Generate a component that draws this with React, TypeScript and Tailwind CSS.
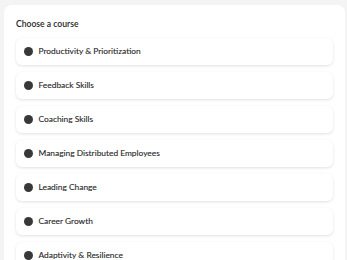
const courses = [
  'Productivity & Prioritization',
  'Feedback Skills',
  'Coaching Skills',
  'Managing Distributed Employees',
  'Leading Change',
  'Career Growth',
  'Adaptivity & Resilience',
];

export default function App() {
  return (
    <div className="h-[260px] w-[347px] overflow-hidden bg-[#f4f4f4] pt-[5px] pl-[4px] pr-[2px] font-['Lato',sans-serif] text-[#252525]">
      <div className="rounded-[8px] bg-white px-[12px] pt-[11px] pb-4">
        <h2 className="mb-[6px] text-[8.6px] leading-[16px] font-semibold">Choose a course</h2>
        <div className="flex flex-col gap-[7px]">
          {courses.map((c) => (
            <div
              key={c}
              className="flex h-[27px] items-center gap-[6px] rounded-[6px] bg-white pl-[8px] shadow-[0_1px_3px_rgba(0,0,0,0.12)]"
            >
              <span className="h-[8.5px] w-[8.5px] shrink-0 rounded-full bg-[#383838]" />
              <span className="text-[8.4px] leading-none [-webkit-text-stroke:0.1px_#252525]">{c}</span>
            </div>
          ))}
        </div>
      </div>
    </div>
  );
}
